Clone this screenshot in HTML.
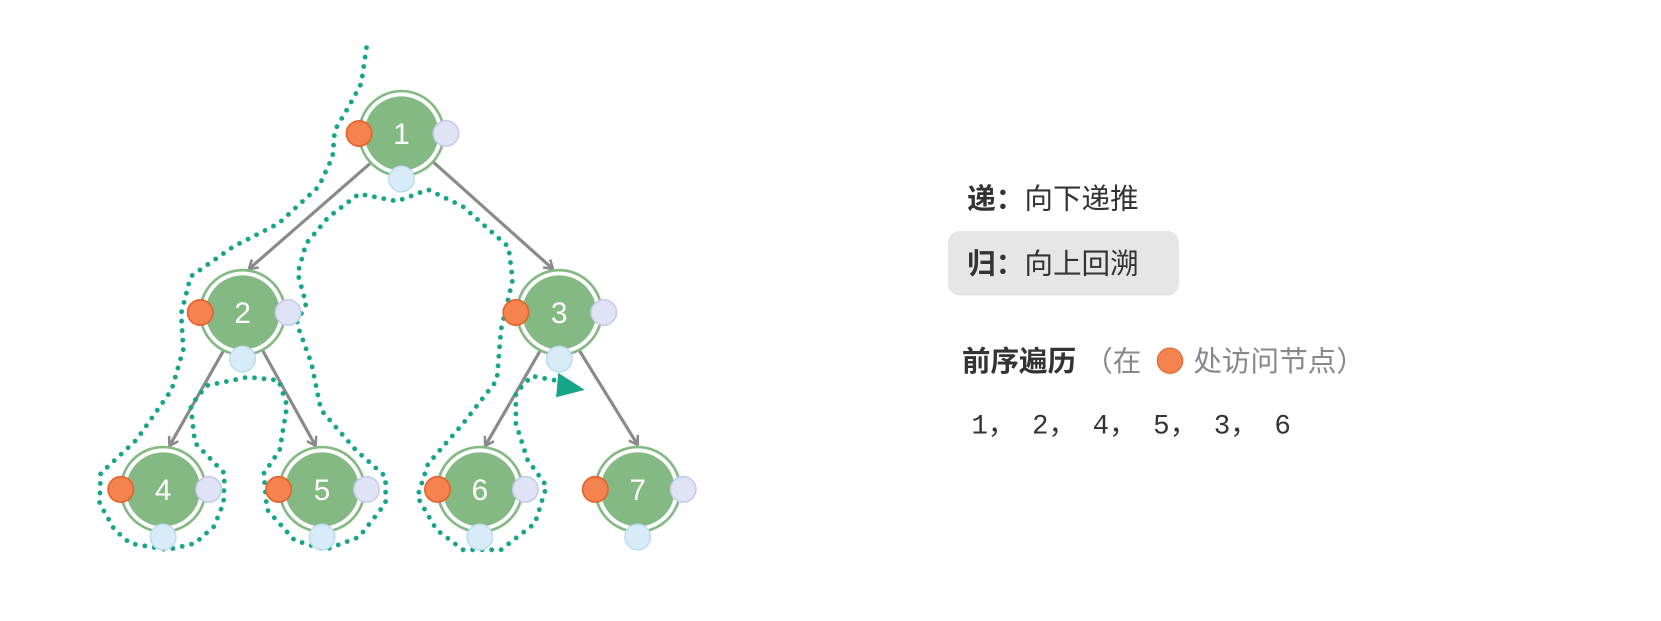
<!DOCTYPE html>
<html><head><meta charset="utf-8"><style>
body{margin:0;width:1661px;height:621px;background:#fff;overflow:hidden;position:relative;font-family:"Liberation Sans","Noto Sans CJK SC",sans-serif;color:#333}
#w{position:absolute;left:0;top:0;width:1568px;height:586px;transform:scale(1.0593);transform-origin:0 0}
.t{position:absolute;font-size:26px;white-space:nowrap;line-height:32px}
b{font-weight:bold}
.dot{display:inline-block;width:23px;height:23px;border-radius:50%;background:#f5834f;border:1.5px solid #e4612b;vertical-align:-3px;margin:0 10px 0 14px}
</style></head><body><div id="w">
<svg width="1568" height="586" style="position:absolute;left:0;top:0">
<defs>
<marker id="ar" markerWidth="12" markerHeight="12" refX="9" refY="6" orient="auto" markerUnits="userSpaceOnUse" viewBox="0 0 12 12">
<path d="M1,1 L9,6 L1,11" fill="none" stroke="#8a8a8a" stroke-width="2.4"/>
</marker>
<g id="n">
<circle r="40" fill="#fff" stroke="#84b983" stroke-width="2.5"/>
<circle r="35" fill="#84b983"/>
</g>
</defs>
<g stroke="#8a8a8a" stroke-width="3" fill="none" marker-end="url(#ar)">
<line x1="352" y1="152" x2="235" y2="254"/>
<line x1="408" y1="152" x2="522" y2="254"/>
<line x1="211" y1="331" x2="160" y2="421"/>
<line x1="248" y1="331" x2="298" y2="421"/>
<line x1="510" y1="331" x2="458" y2="421"/>
<line x1="547" y1="331" x2="602" y2="420"/>
</g>
<polyline points="346,45 341,79 329,101 316,123 314,148 301,176 263,211 220,233 180,261 171,296 173,330 162,368 129,415 95,447 94,475 108,500 123,513 158,519 184,513 202,497 211,475 212,447 184,418 180,383 195,364 234,356 263,359 271,383 264,425 249,447 252,481 278,510 307,519 339,507 364,475 364,450 336,425 303,387 294,343 280,305 289,287 281,258 289,230 310,205 339,183 375,190 404,179 437,195 480,233 484,264 473,311 469,359 437,400 404,438 394,469 412,500 437,519 473,519 505,494 516,459 498,434 487,400 487,371 502,355 524,359"
 fill="none" stroke="#17a589" stroke-width="4.6" stroke-linecap="round" stroke-linejoin="round" stroke-dasharray="0 9"/>
<path d="M527,352 L552,368 L525,375 Z" fill="#17a589"/>
<g font-family="Liberation Sans, sans-serif" font-size="28" fill="#fff" text-anchor="middle">
<use href="#n" x="379" y="126"/><text x="379" y="136">1</text>
<use href="#n" x="229" y="295"/><text x="229" y="305">2</text>
<use href="#n" x="528" y="295"/><text x="528" y="305">3</text>
<use href="#n" x="154" y="462"/><text x="154" y="472">4</text>
<use href="#n" x="304" y="462"/><text x="304" y="472">5</text>
<use href="#n" x="453" y="462"/><text x="453" y="472">6</text>
<use href="#n" x="602" y="462"/><text x="602" y="472">7</text>
</g>
<g stroke-width="1.5">
<g fill="#f5834f" stroke="#e4612b">
<circle cx="339" cy="126" r="12"/><circle cx="189" cy="295" r="12"/><circle cx="487" cy="295" r="12"/>
<circle cx="114" cy="462" r="12"/><circle cx="263" cy="462" r="12"/><circle cx="413" cy="462" r="12"/><circle cx="562" cy="462" r="12"/>
</g>
<g fill="#e0e3f6" stroke="#c5cbee">
<circle cx="421" cy="126" r="12"/><circle cx="272" cy="295" r="12"/><circle cx="570" cy="295" r="12"/>
<circle cx="197" cy="462" r="12"/><circle cx="346" cy="462" r="12"/><circle cx="496" cy="462" r="12"/><circle cx="645" cy="462" r="12"/>
</g>
<g fill="#d8ebf8" stroke="#bedcf2">
<circle cx="379" cy="169" r="12"/><circle cx="229" cy="339" r="12"/><circle cx="528" cy="339" r="12"/>
<circle cx="154" cy="507" r="12"/><circle cx="304" cy="507" r="12"/><circle cx="453" cy="507" r="12"/><circle cx="602" cy="507" r="12"/>
</g>
</g>
<rect x="895" y="218" width="218" height="61" rx="11" fill="#e6e6e6"/>
</svg>
<div class="t" style="left:913px;top:172px;font-size:27px"><b>递：</b>向下递推</div>
<div class="t" style="left:913px;top:233px;font-size:27px"><b>归：</b>向上回溯</div>
<div class="t" style="left:908px;top:325px;font-size:27px"><b>前序遍历</b><span style="color:#888"> （在<span class="dot"></span>处访问节点）</span></div>
<div class="t" style="left:917px;top:386px;font-family:'Liberation Mono','Noto Sans CJK SC',monospace">1， 2， 4， 5， 3， 6</div>
</div></body></html>
